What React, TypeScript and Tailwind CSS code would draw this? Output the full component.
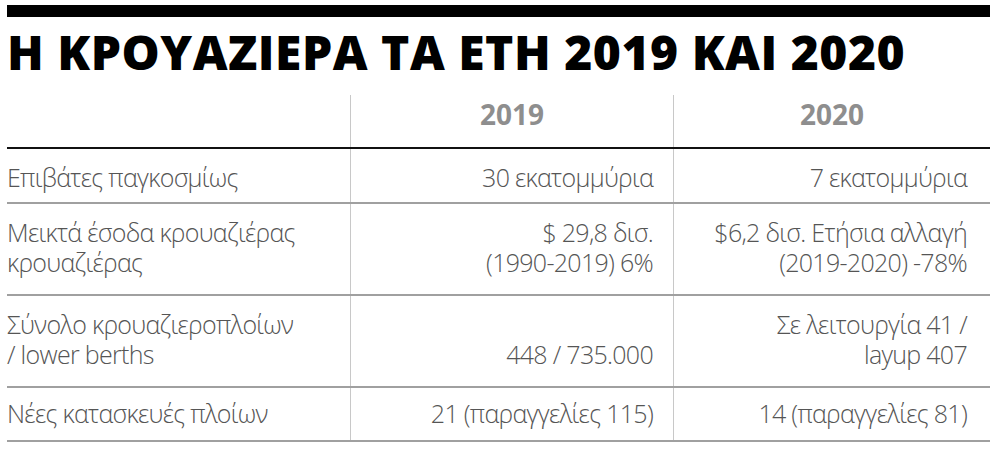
const rows: { label: string[]; a: string[]; b: string[]; h: string; pt: string }[] = [
  { label: ['Επιβάτες παγκοσμίως'], a: ['30 εκατομμύρια'], b: ['7 εκατομμύρια'], h: 'h-[55px]', pt: 'pt-[13px]' },
  {
    label: ['Μεικτά έσοδα κρουαζιέρας', 'κρουαζιέρας'],
    a: ['$ 29,8 δισ.', '(1990-2019) 6%'],
    b: ['$6,2 δισ. Ετήσια αλλαγή', '(2019-2020) -78%'],
    h: 'h-[92px]',
    pt: 'pt-[13px]',
  },
  {
    label: ['Σύνολο κρουαζιεροπλοίων', '/ lower berths'],
    a: ['\u00a0', '448 / 735.000'],
    b: ['Σε λειτουργία 41 /', 'layup 407'],
    h: 'h-[92px]',
    pt: 'pt-[13px]',
  },
  { label: ['Νέες κατασκευές πλοίων'], a: ['21 (παραγγελίες 115)'], b: ['14 (παραγγελίες 81)'], h: 'h-[54px]', pt: 'pt-[10px]' },
];

function Lines({ items }: { items: string[] }) {
  return (
    <>
      {items.map((t, i) => (
        <div key={i} className="whitespace-nowrap">
          {t}
        </div>
      ))}
    </>
  );
}

export default function App() {
  return (
    <div className="w-[1000px] h-[459px] bg-white pl-[7px] pr-[10px] pt-[5px] font-['Open_Sans',sans-serif] overflow-hidden">
      <div className="h-[12px] bg-black" />
      <h1 className="mt-[11px] text-[48px] leading-[48px] font-extrabold tracking-[0.5px] text-black whitespace-nowrap">
        Η ΚΡΟΥΑΖΙΕΡΑ ΤΑ ΕΤΗ 2019 ΚΑΙ 2020
      </h1>

      <div className="mt-[19px]">
        <div className="grid grid-cols-[344px_323px_316px] h-[54px] border-b-2 border-[#111]">
          <div className="border-r-[1.5px] border-[#c8c8c8]" />
          <div className="border-r-[1.5px] border-[#c8c8c8] pt-[5px] text-center text-[28px] leading-[28px] font-bold text-[#8e8e8e]">
            2019
          </div>
          <div className="pt-[5px] text-center text-[28px] leading-[28px] font-bold text-[#8e8e8e]">2020</div>
        </div>

        {rows.map((r, i) => (
          <div
            key={i}
            className={`grid grid-cols-[344px_323px_316px] ${r.h} border-b-2 border-[#a0a0a0] text-[25px] leading-[30px] tracking-[-0.7px] font-light text-[#555]`}
          >
            <div className={`border-r-[1.5px] border-[#c8c8c8] ${r.pt}`}>
              <Lines items={r.label} />
            </div>
            <div className={`border-r-[1.5px] border-[#c8c8c8] ${r.pt} pr-[20px] text-right`}>
              <Lines items={r.a} />
            </div>
            <div className={`${r.pt} pr-[23px] text-right`}>
              <Lines items={r.b} />
            </div>
          </div>
        ))}
      </div>
    </div>
  );
}
